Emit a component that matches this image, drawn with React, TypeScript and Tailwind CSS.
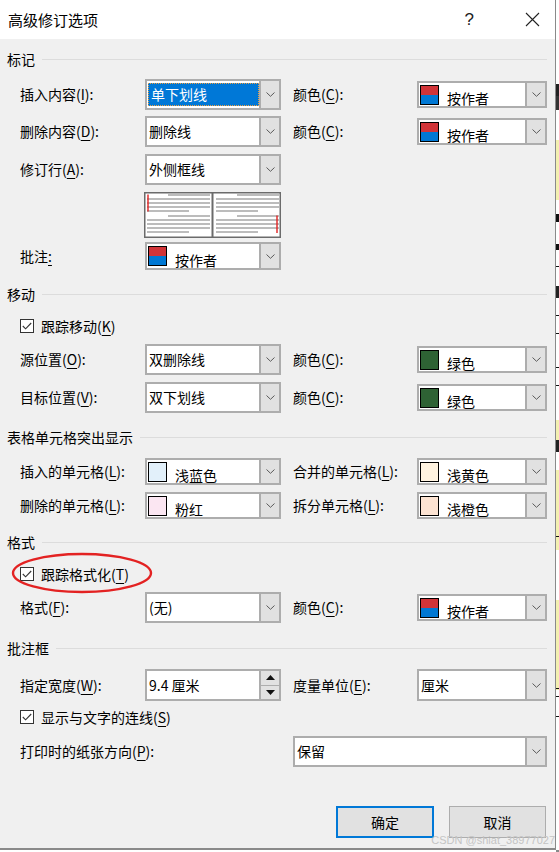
import React from 'react'

const F = "font-['Microsoft_YaHei_UI','Noto_Sans_CJK_SC',sans-serif]"

function Acc({ pre, k, post = '):' }: { pre: string; k: string; post?: string }) {
  return (
    <span>
      {pre}(<span className="underline underline-offset-[3px]">{k}</span>{post}
    </span>
  )
}

function Chevron() {
  return (
    <svg width="9" height="5" viewBox="0 0 9 5">
      <polyline points="0.5,0.5 4.5,4.3 8.5,0.5" fill="none" stroke="#5a5a5a" strokeWidth="1" />
    </svg>
  )
}

function Swatch({ color, split }: { color?: string; split?: boolean }) {
  if (split) {
    return (
      <div className="flex h-[20px] w-[19px] shrink-0 flex-col border border-black">
        <div className="flex-1 bg-[#d13438]" />
        <div className="flex-1 bg-[#0078d4]" />
      </div>
    )
  }
  return <div className="h-[20px] w-[19px] shrink-0 border border-black" style={{ background: color }} />
}

function Combo({
  children,
  w,
  h,
  swatch,
  selected,
}: {
  children: React.ReactNode
  w: string
  h: string
  swatch?: React.ReactNode
  selected?: boolean
}) {
  return (
    <div className={`flex ${w} ${h} shrink-0 border-2 border-[#adadad] bg-white`}>
      <div className="flex min-w-0 flex-1 items-center">
        {selected ? (
          <div className="ml-[1px] flex h-[calc(100%-4px)] flex-1 items-center border border-dotted border-[#f0a040] bg-[#0078d7] pl-[2px] text-white">
            {children}
          </div>
        ) : swatch ? (
          <div className="flex h-full items-center pl-[1px]">
            {swatch}
            <span className="ml-[8px] mt-[8px]">{children}</span>
          </div>
        ) : (
          <span className="pl-[2px]">{children}</span>
        )}
      </div>
      <div className="flex w-[20px] items-center justify-center border-l-2 border-[#adadad] bg-[#e1e1e1]">
        <Chevron />
      </div>
    </div>
  )
}

function Header({ title, className = '' }: { title: string; className?: string }) {
  return (
    <div className={`flex h-[20px] items-center ${className}`}>
      <span className="leading-[20px]">{title}</span>
      <div className="ml-[7px] h-px flex-1 bg-[#dcdcdc]" />
    </div>
  )
}

function Check({ children, className = '' }: { children: React.ReactNode; className?: string }) {
  return (
    <div className={`ml-[13px] flex h-[20px] items-center ${className}`}>
      <div className="flex h-[14px] w-[14px] items-center justify-center border border-[#333] bg-white">
        <svg width="10" height="8" viewBox="0 0 10 8">
          <polyline points="0.8,4 3.6,6.8 9.2,1" fill="none" stroke="#333" strokeWidth="1.1" />
        </svg>
      </div>
      <span className="ml-[7px]">{children}</span>
    </div>
  )
}

function Row({ children, className = '', h = 'h-[31px]' }: { children: React.ReactNode; className?: string; h?: string }) {
  return <div className={`ml-[13px] flex ${h} items-center ${className}`}>{children}</div>
}

const LeftLabel = ({ children }: { children: React.ReactNode }) => <div className="w-[125px] shrink-0">{children}</div>
const RightLabel = ({ children }: { children: React.ReactNode }) => <div className="ml-[12px] w-[124px] shrink-0">{children}</div>

function Preview() {
  const line = (x1: number, x2: number, y: number) => (
    <line key={`${x1}-${y}`} x1={x1} x2={x2} y1={y} y2={y} stroke="#a6a6a6" strokeWidth="1.4" />
  )
  const pane = (ox: number, ys: number[]) =>
    ys.map((y, i) => {
      const partStart = i === 0 || i === 5
      const partEnd = i === 4 || i === 9
      return line(ox + (partStart ? 21 : 0), ox + (partEnd ? 42 : 63), y)
    })
  const ys = [3, 7, 11, 15, 19, 24, 28, 32, 36, 40]
  return (
    <svg width="137" height="46" viewBox="0 0 137 46" className="block">
      <rect x="0" y="0" width="137" height="46" fill="#ffffff" />
      {pane(3, ys)}
      {pane(72, ys)}
      <line x1="4" x2="4" y1="2.5" y2="19.5" stroke="#e02020" strokeWidth="1.4" />
      <line x1="133" x2="133" y1="23.5" y2="41" stroke="#e02020" strokeWidth="1.4" />
      <rect x="0.75" y="0.75" width="135.5" height="44.5" fill="none" stroke="#6b6b6b" strokeWidth="1.5" />
      <line x1="68.5" x2="68.5" y1="0" y2="46" stroke="#6b6b6b" strokeWidth="2" />
    </svg>
  )
}

export default function App() {
  return (
    <div className={`${F} flex h-[852px] w-[559px] overflow-hidden bg-white text-[14px] text-black`}>
      <div className="relative flex h-[850px] w-[556px] shrink-0 flex-col border-r border-b-2 border-[#8a8a8a] bg-[#f0f0f0]">
        {/* Title bar */}
        <div className="flex h-[39px] shrink-0 items-center bg-white">
          <span className="ml-[8px] text-[15px] leading-none">高级修订选项</span>
          <span className="ml-auto mr-[51px] font-['Liberation_Sans',sans-serif] text-[17px] text-[#222]">?</span>
          <svg width="15" height="15" viewBox="0 0 15 15" className="mr-[15px]">
            <path d="M1 1 L14 14 M14 1 L1 14" stroke="#222" strokeWidth="1.1" />
          </svg>
        </div>

        <div className="flex flex-col pl-[7px] pr-[8px]">
          <Header title="标记" className="mt-[10px]" />
          <Row className="mt-[10px]">
            <LeftLabel><Acc pre="插入内容" k="I" /></LeftLabel>
            <Combo w="w-[136px]" h="h-[31px]" selected>单下划线</Combo>
            <RightLabel><Acc pre="颜色" k="C" /></RightLabel>
            <Combo w="w-[130px]" h="h-[27px]" swatch={<Swatch split />}>按作者</Combo>
          </Row>
          <Row className="mt-[6px]">
            <LeftLabel><Acc pre="删除内容" k="D" /></LeftLabel>
            <Combo w="w-[136px]" h="h-[31px]">删除线</Combo>
            <RightLabel><Acc pre="颜色" k="C" /></RightLabel>
            <Combo w="w-[130px]" h="h-[27px]" swatch={<Swatch split />}>按作者</Combo>
          </Row>
          <Row className="mt-[7px]">
            <LeftLabel><Acc pre="修订行" k="A" /></LeftLabel>
            <Combo w="w-[136px]" h="h-[31px]">外侧框线</Combo>
          </Row>
          <div className="ml-[137px] mt-[7px]">
            <Preview />
          </div>
          <Row className="mt-[4px]" h="h-[28px]">
            <LeftLabel>
              批注<span className="underline underline-offset-[3px]">:</span>
            </LeftLabel>
            <Combo w="w-[136px]" h="h-[28px]" swatch={<Swatch split />}>按作者</Combo>
          </Row>

          <Header title="移动" className="mt-[14px]" />
          <Check className="mt-[12px]">
            <Acc pre="跟踪移动" k="K" post=")" />
          </Check>
          <Row className="mt-[8px]">
            <LeftLabel><Acc pre="源位置" k="O" /></LeftLabel>
            <Combo w="w-[136px]" h="h-[31px]">双删除线</Combo>
            <RightLabel><Acc pre="颜色" k="C" /></RightLabel>
            <Combo w="w-[130px]" h="h-[27px]" swatch={<Swatch color="#2e6234" />}>绿色</Combo>
          </Row>
          <Row className="mt-[7px]">
            <LeftLabel><Acc pre="目标位置" k="V" /></LeftLabel>
            <Combo w="w-[136px]" h="h-[31px]">双下划线</Combo>
            <RightLabel><Acc pre="颜色" k="C" /></RightLabel>
            <Combo w="w-[130px]" h="h-[27px]" swatch={<Swatch color="#2e6234" />}>绿色</Combo>
          </Row>

          <Header title="表格单元格突出显示" className="mt-[14px]" />
          <Row className="mt-[11px]" h="h-[27px]">
            <LeftLabel><Acc pre="插入的单元格" k="L" /></LeftLabel>
            <Combo w="w-[136px]" h="h-[27px]" swatch={<Swatch color="#e2f0fa" />}>浅蓝色</Combo>
            <RightLabel><Acc pre="合并的单元格" k="L" /></RightLabel>
            <Combo w="w-[130px]" h="h-[27px]" swatch={<Swatch color="#fff3e0" />}>浅黄色</Combo>
          </Row>
          <Row className="mt-[7px]" h="h-[27px]">
            <LeftLabel><Acc pre="删除的单元格" k="L" /></LeftLabel>
            <Combo w="w-[136px]" h="h-[27px]" swatch={<Swatch color="#fbe6f2" />}>粉红</Combo>
            <RightLabel><Acc pre="拆分单元格" k="L" /></RightLabel>
            <Combo w="w-[130px]" h="h-[27px]" swatch={<Swatch color="#fce3d2" />}>浅橙色</Combo>
          </Row>

          <Header title="格式" className="mt-[13px]" />
          <Check className="mt-[12px]">
            <Acc pre="跟踪格式化" k="T" post=")" />
          </Check>
          <Row className="mt-[8px]">
            <LeftLabel><Acc pre="格式" k="F" /></LeftLabel>
            <Combo w="w-[136px]" h="h-[31px]">(无)</Combo>
            <RightLabel><Acc pre="颜色" k="C" /></RightLabel>
            <Combo w="w-[130px]" h="h-[27px]" swatch={<Swatch split />}>按作者</Combo>
          </Row>

          <Header title="批注框" className="mt-[15px]" />
          <Row className="mt-[11px]" h="h-[32px]">
            <LeftLabel><Acc pre="指定宽度" k="W" /></LeftLabel>
            <div className="flex h-[32px] w-[136px] shrink-0 border-2 border-[#adadad] bg-white">
              <span className="flex flex-1 items-center pl-[2px]">9.4 厘米</span>
              <div className="flex w-[20px] flex-col border-l-2 border-[#adadad] bg-[#e1e1e1]">
                <div className="flex flex-1 items-center justify-center border-b border-[#adadad]">
                  <svg width="9" height="5" viewBox="0 0 9 5"><polygon points="0,5 4.5,0 9,5" fill="#111" /></svg>
                </div>
                <div className="flex flex-1 items-center justify-center">
                  <svg width="9" height="5" viewBox="0 0 9 5"><polygon points="0,0 4.5,5 9,0" fill="#111" /></svg>
                </div>
              </div>
            </div>
            <RightLabel><Acc pre="度量单位" k="E" /></RightLabel>
            <Combo w="w-[130px]" h="h-[32px]">厘米</Combo>
          </Row>
          <Check className="mt-[6px]">
            <Acc pre="显示与文字的连线" k="S" post=")" />
          </Check>
          <Row className="mt-[9px]">
            <div className="w-[273px] shrink-0"><Acc pre="打印时的纸张方向" k="P" /></div>
            <Combo w="w-[254px]" h="h-[31px]">保留</Combo>
          </Row>

          <div className="mt-[39px] flex justify-end gap-[15px] pr-[1px]">
            <button className="flex h-[32px] w-[98px] items-center justify-center border-2 border-[#0078d7] bg-[#e1e1e1]">
              确定
            </button>
            <button className="flex h-[32px] w-[97px] items-center justify-center border border-[#adadad] bg-[#e1e1e1]">
              取消
            </button>
          </div>
        </div>

        {/* red annotation ellipse */}
        <svg className="pointer-events-none absolute left-[10px] top-[551px]" width="144" height="44" viewBox="0 0 144 44">
          <ellipse cx="72" cy="22" rx="69" ry="19" fill="none" stroke="#e32222" strokeWidth="2.4" />
        </svg>

        {/* watermark */}
        <span className="absolute right-[0px] top-[835px] font-['Liberation_Sans',sans-serif] text-[11px] leading-none text-[#c4c4c4]">
          CSDN @shiat_38977027
        </span>
      </div>

      {/* document behind the dialog */}
      <svg width="3" height="852" viewBox="0 0 3 852" className="block shrink-0">
        <rect x="0" y="0" width="3" height="852" fill="#ffffff" />
        <rect x="0" y="84" width="3" height="14" fill="#222" />
        <rect x="0" y="96" width="3" height="14" fill="#333" />
        <rect x="0" y="140" width="3" height="60" fill="#f3f0b0" />
        <rect x="0" y="214" width="3" height="8" fill="#111" />
        <rect x="0" y="244" width="3" height="6" fill="#111" />
        <rect x="0" y="266" width="3" height="1" fill="#111" />
        <rect x="0" y="286" width="3" height="12" fill="#222" />
        <rect x="0" y="315" width="3" height="1" fill="#111" />
        <rect x="0" y="333" width="3" height="1" fill="#111" />
        <rect x="0" y="367" width="3" height="1" fill="#111" />
        <rect x="0" y="385" width="3" height="1" fill="#111" />
        <rect x="0" y="420" width="3" height="30" fill="#f3f0b0" />
        <rect x="0" y="440" width="3" height="12" fill="#222" />
        <rect x="0" y="470" width="3" height="80" fill="#f3f0b0" />
        <rect x="0" y="536" width="3" height="1" fill="#111" />
        <rect x="0" y="600" width="3" height="90" fill="#f3f0b0" />
        <rect x="0" y="688" width="3" height="1" fill="#111" />
        <rect x="0" y="696" width="3" height="1" fill="#111" />
        <rect x="0" y="716" width="3" height="1" fill="#111" />
        <rect x="0" y="850" width="3" height="2" fill="#8a8a8a" />
      </svg>
    </div>
  )
}
